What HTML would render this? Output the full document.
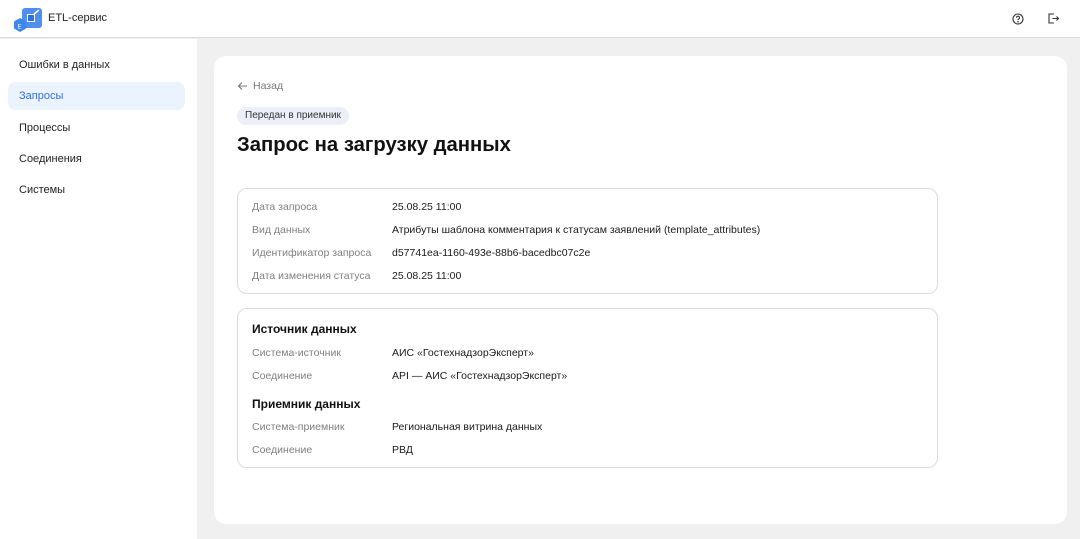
<!DOCTYPE html>
<html><head><meta charset="utf-8"><style>
*{box-sizing:border-box;margin:0;padding:0}
body{width:1080px;height:539px;overflow:hidden;font-family:"Liberation Sans",sans-serif;background:#f0f0f0;position:relative;color:#1a1a1a}
.hdr{position:absolute;left:0;top:0;width:1080px;height:38px;background:#fff;border-bottom:1px solid #dcdcdc}
.hdr .t{position:absolute;left:48px;top:12px;font-size:11px;color:#222}
.side{position:absolute;left:0;top:39px;width:197px;height:500px;background:#fff}
.side div{position:absolute;left:19px;font-size:11px;color:#222}
.sel{position:absolute;left:8px;top:43px;width:177px;height:28px;background:#eaf3fe;border-radius:8px}
.card{position:absolute;left:214px;top:56px;width:853px;height:468px;background:#fff;border-radius:12px}
.box{position:absolute;left:23px;width:701px;border:1px solid #dcdcdc;border-radius:10px}
.r{position:absolute;font-size:10.5px}
.l{left:14px;color:#808080}
.v{left:154px;color:#1a1a1a}
h1{position:absolute;left:23px;top:78px;font-size:20.3px;font-weight:bold;color:#111}
h2{position:absolute;left:14px;font-size:12px;font-weight:bold;color:#111}
</style></head><body>
<div class="hdr">
<svg style="position:absolute;left:12px;top:6px" width="32" height="28" viewBox="0 0 32 28">
<rect x="10" y="2" width="20" height="20" rx="3" fill="#4f8ff0"/>
<rect x="15" y="8" width="8" height="8" fill="#fff"/><rect x="16" y="9" width="6" height="6" fill="#2f6fe0"/>
<path d="M22 8 L27 4" stroke="#fff" stroke-width="1.5"/>
<polygon points="8,12 14,15.5 14,22.5 8,26 2,22.5 2,15.5" fill="#3f86ee"/>
<text x="5.5" y="22.5" font-size="6" fill="#fff" font-family="Liberation Sans">E</text>
</svg>
<div class="t">ETL-сервис</div>
<svg style="position:absolute;left:1012px;top:13px" width="12" height="12" viewBox="0 0 12 12" fill="none" stroke="#333" stroke-width="1.1"><circle cx="6" cy="6" r="5"/><path d="M4.5 4.7a1.5 1.5 0 1 1 2 1.4c-.4.2-.5.5-.5.9"/><circle cx="6" cy="8.7" r=".3" fill="#333"/></svg>
<svg style="position:absolute;left:1047px;top:12px" width="13" height="13" viewBox="0 0 13 13" fill="none" stroke="#333" stroke-width="1.1"><path d="M7 2H2v9h5M5.5 6.5h6M9.5 4.5l2 2-2 2"/></svg>
</div>
<div class="side">
<div style="top:20px;color:#222">Ошибки в данных</div>
<span class="sel"></span>
<div style="top:51px;color:#3a6fd8">Запросы</div>
<div style="top:83px">Процессы</div>
<div style="top:114px">Соединения</div>
<div style="top:145px">Системы</div>
</div>
<div class="card">
<svg style="position:absolute;left:23px;top:25px" width="11" height="10" viewBox="0 0 11 10" fill="none" stroke="#777" stroke-width="1.1"><path d="M10 5H1.5M5 1.5L1.5 5 5 8.5"/></svg>
<div style="position:absolute;left:39px;top:24px;font-size:10.5px;color:#777">Назад</div>
<div style="position:absolute;left:23px;top:51px;height:18px;padding:0 8px;background:#eceff8;border-radius:9px;font-size:10px;line-height:18px;color:#333">Передан в приемник</div>
<h1>Запрос на загрузку данных</h1>
<div class="box" style="top:132px;height:106px">
<div class="r l" style="top:12px">Дата запроса</div><div class="r v" style="top:12px">25.08.25 11:00</div>
<div class="r l" style="top:35px">Вид данных</div><div class="r v" style="top:35px">Атрибуты шаблона комментария к статусам заявлений (template_attributes)</div>
<div class="r l" style="top:58px">Идентификатор запроса</div><div class="r v" style="top:58px">d57741ea-1160-493e-88b6-bacedbc07c2e</div>
<div class="r l" style="top:81px">Дата изменения статуса</div><div class="r v" style="top:81px">25.08.25 11:00</div>
</div>
<div class="box" style="top:252px;height:160px">
<h2 style="top:13px">Источник данных</h2>
<div class="r l" style="top:38px">Система-источник</div><div class="r v" style="top:38px">АИС «ГостехнадзорЭксперт»</div>
<div class="r l" style="top:61px">Соединение</div><div class="r v" style="top:61px">API — АИС «ГостехнадзорЭксперт»</div>
<h2 style="top:88px">Приемник данных</h2>
<div class="r l" style="top:112px">Система-приемник</div><div class="r v" style="top:112px">Региональная витрина данных</div>
<div class="r l" style="top:135px">Соединение</div><div class="r v" style="top:135px">РВД</div>
</div>
</div>
</body></html>
